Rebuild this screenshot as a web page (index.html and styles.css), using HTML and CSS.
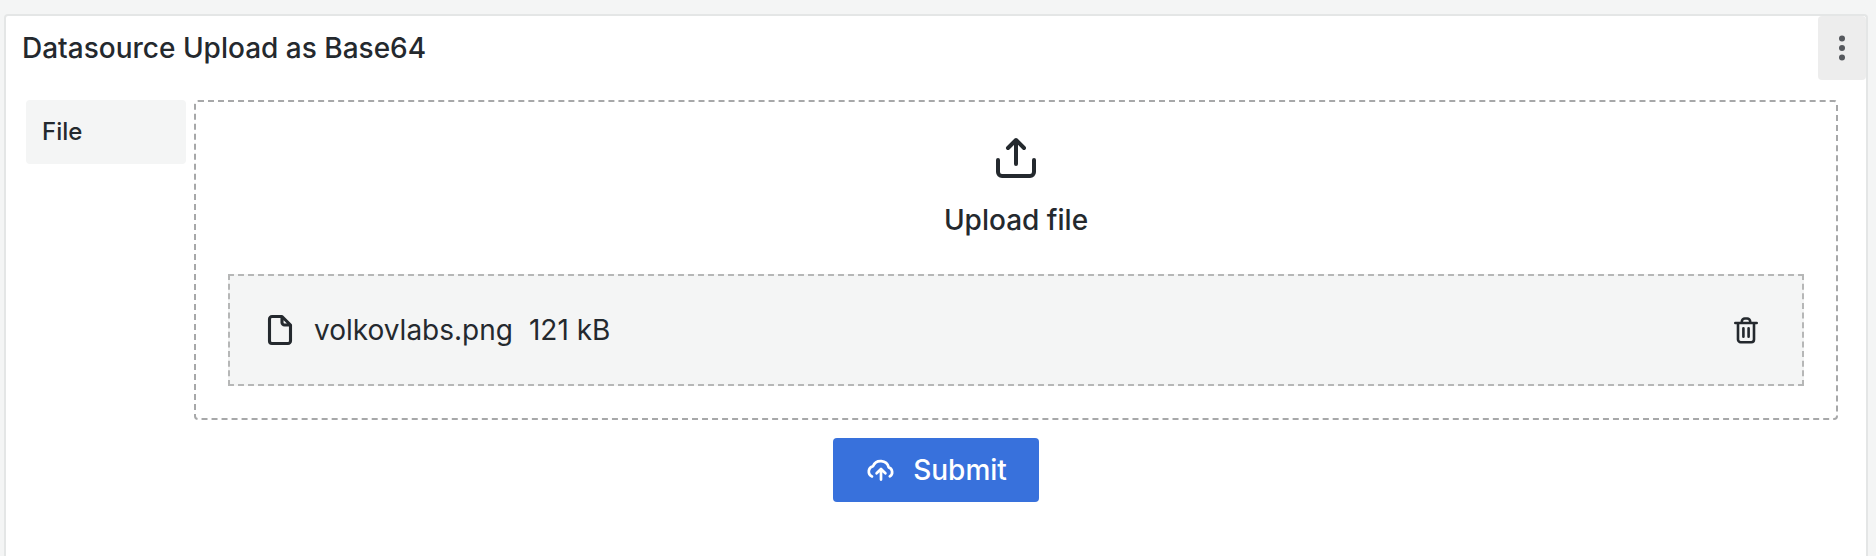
FILE: index.html
```html
<!DOCTYPE html>
<html lang="en">
<head>
<meta charset="utf-8">
<title>Datasource Upload as Base64</title>
<link rel="stylesheet" href="styles.css">
</head>
<body>
<section class="panel">
  <header class="panel-header">
    <h2 class="panel-title">Datasource Upload as Base64</h2>
    <button class="menu-button" type="button" aria-label="Menu">
      <svg width="32" height="32" viewBox="0 0 32 32" fill="currentColor" aria-hidden="true"><circle cx="16" cy="6.5" r="3"/><circle cx="16" cy="16" r="3"/><circle cx="16" cy="25.5" r="3"/></svg>
    </button>
  </header>
  <form class="form">
    <div class="field">
      <label class="field-label" for="file">File</label>
      <div class="dropzone">
        <label class="dropzone-prompt">
          <input class="file-input" id="file" type="file">
          <svg width="48" height="48" viewBox="0 0 48 48" fill="none" stroke="currentColor" stroke-width="4" stroke-linecap="round" stroke-linejoin="round" aria-hidden="true"><path d="M6 26v12a4 4 0 0 0 4 4h28a4 4 0 0 0 4-4V26M24 6v24M16 14l8-8 8 8"/></svg>
          <span class="dropzone-text">Upload file</span>
        </label>
        <div class="file">
          <svg width="36" height="36" viewBox="0 0 36 36" fill="none" stroke="currentColor" stroke-width="3.1" stroke-linecap="round" stroke-linejoin="round" aria-hidden="true"><path d="M20 4.5H10A2.5 2.5 0 0 0 7.500 7v22a2.500 2.500 0 0 0 2.500 2.500h16a2.500 2.500 0 0 0 2.500-2.500V13zM20 5v5.500a2.500 2.500 0 0 0 2.500 2.500h5.500"/></svg>
          <span class="file-name">volkovlabs.png</span>
          <span class="file-size">121 kB</span>
          <button class="remove-button" type="button" aria-label="Remove file">
            <svg width="28" height="28" viewBox="0 0 28 28" fill="none" stroke="currentColor" stroke-width="2.6" stroke-linecap="round" stroke-linejoin="round" aria-hidden="true"><path d="M3.300 7h21.400M9.800 6.500V5.500a3 3 0 0 1 3-3h2.400a3 3 0 0 1 3 3v1M6 7.500v16a2.700 2.700 0 0 0 2.700 2.700h10.600a2.700 2.700 0 0 0 2.700-2.700v-16M11.400 12.300v8.500M16.600 12.300v8.500"/></svg>
          </button>
        </div>
      </div>
    </div>
    <button class="submit-button" type="submit">
      <svg width="32" height="32" viewBox="0 0 32 32" fill="none" stroke="currentColor" stroke-width="2.7" stroke-linecap="round" stroke-linejoin="round" aria-hidden="true"><path d="M7 22.400a5.400 5.400 0 0 1 1-10.200 8.300 8.300 0 0 1 15.700 1.200 5 5 0 0 1 1.100 9M16 25.600V15.400M11.600 19.200l4.400-4.200 4.400 4.200"/></svg>
      <span>Submit</span>
    </button>
  </form>
</section>
</body>
</html>
```
FILE: styles.css
```css
* {
  box-sizing: border-box;
}

body {
  margin: 0;
  padding: 14px 8px 0 4px;
  height: 100vh;
  overflow: hidden;
  display: flex;
  flex-direction: column;
  background: #f4f5f5;
  color: #24292e;
  font-family: Inter, "Liberation Sans", sans-serif;
  font-size: 28px;
  line-height: 44px;
}

svg {
  display: block;
  flex: none;
}

button {
  border: 0;
  padding: 0;
  font: inherit;
  color: inherit;
  cursor: pointer;
}

.panel {
  flex: 1;
  background: #fff;
  border: 2px solid #e4e6e6;
  border-bottom: 0;
  border-radius: 4px 4px 0 0;
}

.panel-header {
  display: flex;
  align-items: center;
  justify-content: space-between;
  padding-left: 16px;
}

.panel-title {
  margin: 0;
  font-size: 28px;
  font-weight: 500;
}

.menu-button {
  display: flex;
  align-items: center;
  justify-content: center;
  width: 48px;
  height: 64px;
  border-radius: 4px;
  background: #ededed;
  color: #56595e;
}

.form {
  display: flex;
  flex-direction: column;
  align-items: center;
  gap: 18px;
  padding: 20px;
}

.field {
  display: flex;
  align-items: flex-start;
  align-self: stretch;
  gap: 8px;
  padding-right: 8px;
}

.field-label {
  width: 160px;
  padding: 10px 16px;
  border-radius: 4px;
  background: #f4f5f5;
  font-size: 24px;
  font-weight: 500;
}

.dropzone {
  flex: 1;
  padding: 32px;
  border: 2px dashed #a7a8a9;
  border-radius: 4px;
}

.dropzone-prompt {
  display: flex;
  flex-direction: column;
  align-items: center;
  gap: 16px;
  margin-bottom: 32px;
  font-weight: 500;
  cursor: pointer;
}

.file-input {
  position: absolute;
  width: 1px;
  height: 1px;
  opacity: 0;
}

.file {
  display: flex;
  align-items: center;
  gap: 16px;
  padding: 32px;
  border: 2px dashed #b6b7b7;
  background: #f4f5f5;
}

.remove-button {
  display: flex;
  align-items: center;
  justify-content: center;
  width: 48px;
  height: 44px;
  margin-left: auto;
  background: none;
}

.submit-button {
  display: flex;
  align-items: center;
  gap: 16px;
  padding: 10px 32px;
  border-radius: 4px;
  background: #3871dc;
  color: #fff;
  font-weight: 500;
}
```
